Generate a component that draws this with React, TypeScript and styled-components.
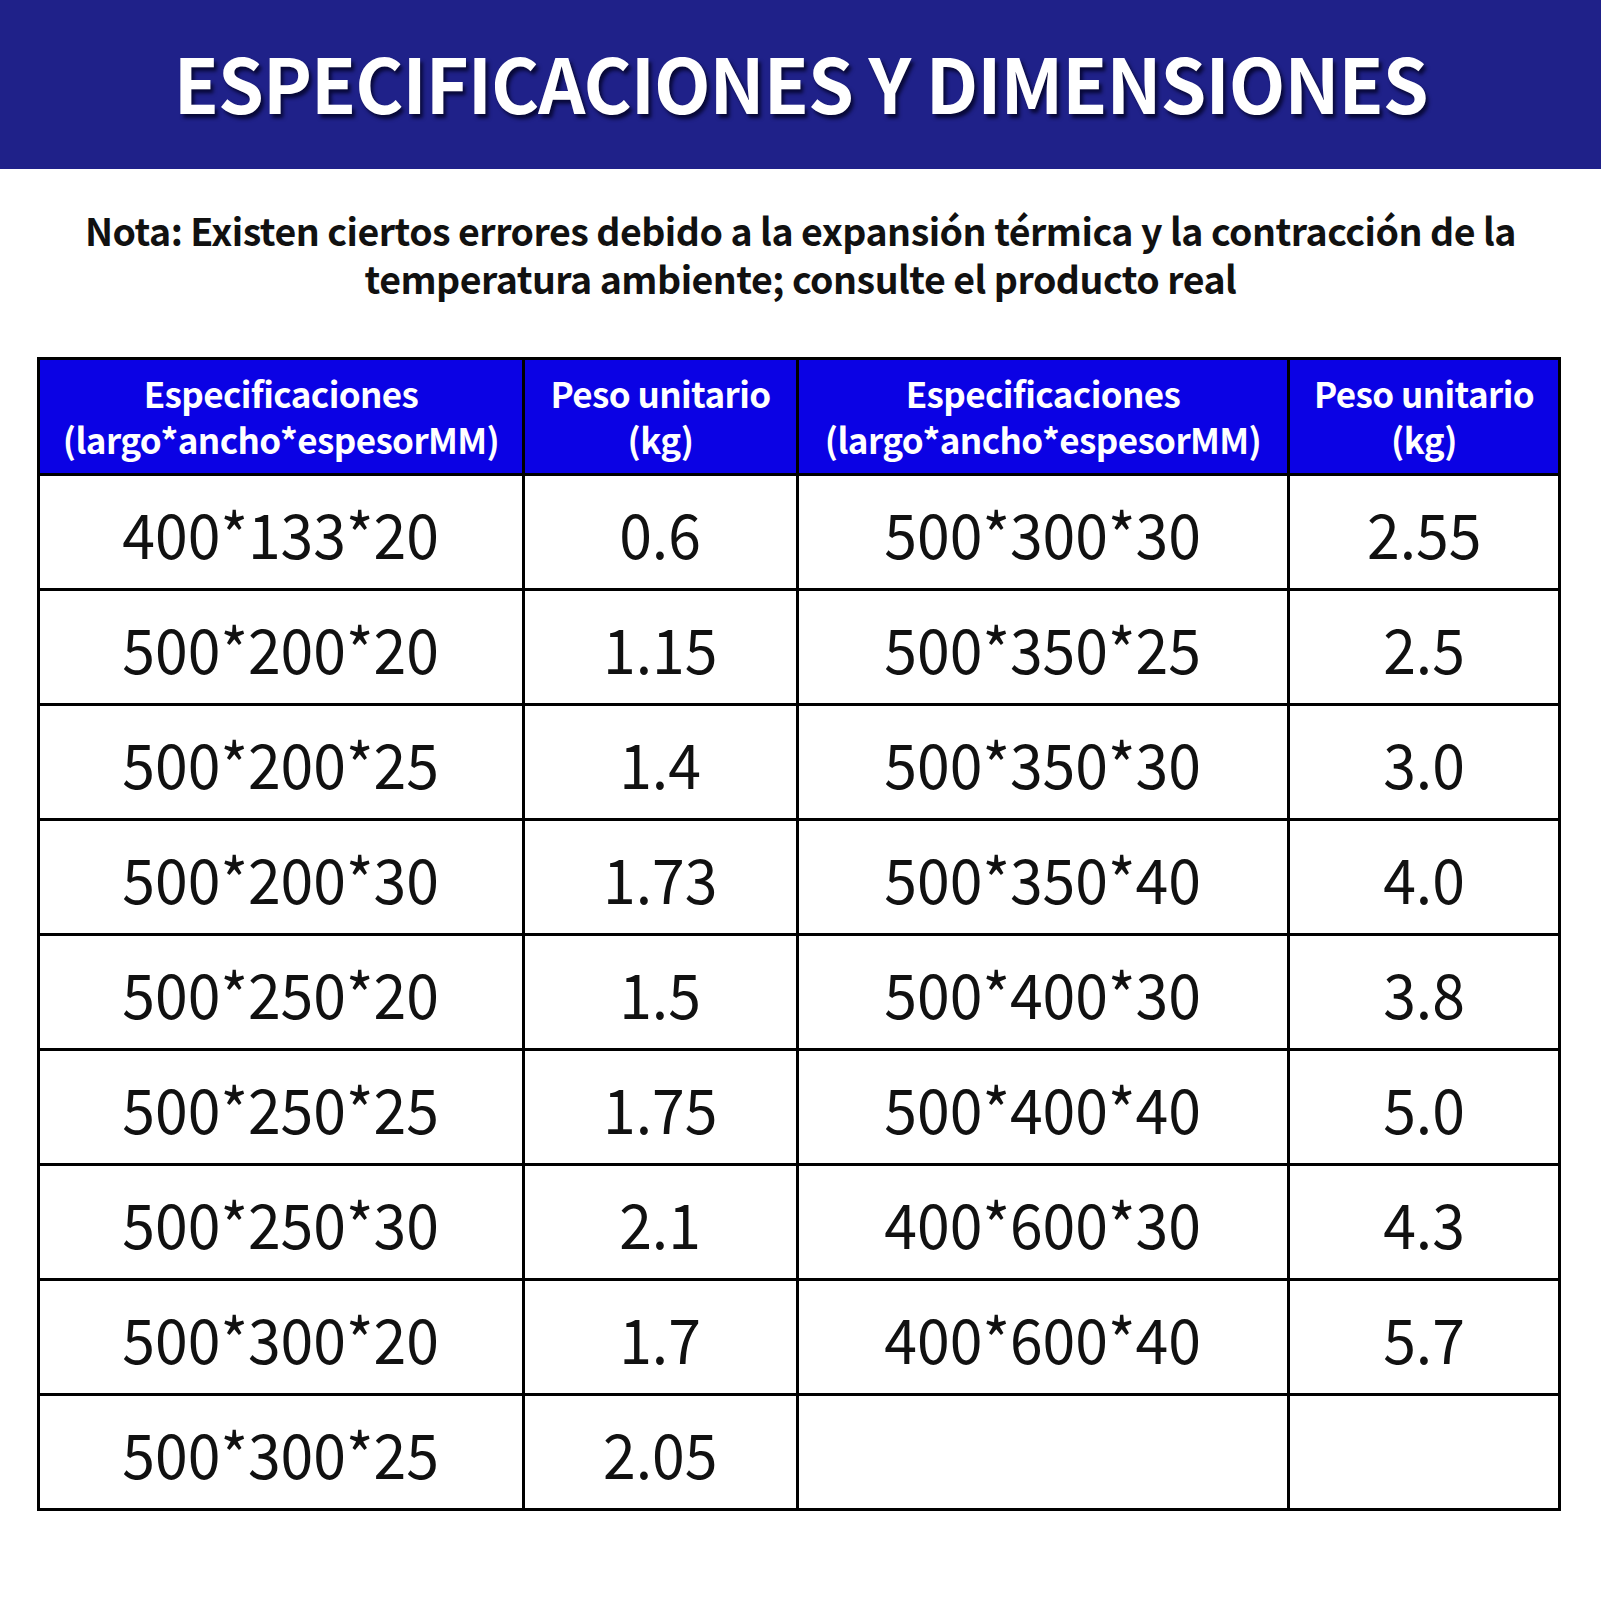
import React from "react";
import styled, { createGlobalStyle } from "styled-components";

const Global = createGlobalStyle`
  html, body { margin: 0; padding: 0; background: #ffffff; }
  body { width: 1601px; height: 1601px; overflow: hidden; font-family: "Noto Sans CJK SC", "Noto Sans", sans-serif; }
`;

const Page = styled.div`
  width: 1601px;
  height: 1601px;
  background: #ffffff;
  display: flex;
  flex-direction: column;
`;

const Banner = styled.header`
  height: 169px;
  background: #1f2189;
  display: flex;
  align-items: center;
  justify-content: center;
`;

const Title = styled.h1`
  margin: 0;
  color: #ffffff;
  font-family: "Noto Sans CJK SC", "Noto Sans", sans-serif;
  font-weight: 700;
  font-size: 75px;
  line-height: 1;
  letter-spacing: -1px;
  text-shadow: 3px 4px 4px rgba(0, 0, 30, 0.75);
  transform: scaleX(0.98);
  white-space: nowrap;
  margin-top: -6px;
`;

const Note = styled.div`
  margin: 37px 0 0;
  display: flex;
  flex-direction: column;
  align-items: center;
`;

const NoteLine = styled.span`
  display: block;
  height: 48px;
  text-align: center;
  color: #111111;
  font-family: "Noto Sans CJK SC", "Noto Sans", sans-serif;
  font-weight: 700;
  font-size: 37.5px;
  line-height: 48px;
  letter-spacing: -0.5px;
  white-space: nowrap;
`;

const Table = styled.table`
  margin: 55px 0 0 37px;
  width: 1521px;
  border-collapse: collapse;
  table-layout: fixed;
  border: 3px solid #000000;
`;

const Col = styled.col<{ $w: number }>`
  width: ${(p) => p.$w}px;
`;

const HeadCell = styled.th`
  height: 111px;
  background: #0b02e4;
  color: #ffffff;
  border: 3px solid #000000;
  padding: 0 0 2px;
  font-family: "Noto Sans CJK SC", "Noto Sans", sans-serif;
  font-weight: 700;
  font-size: 35px;
  line-height: 46px;
  letter-spacing: -0.6px;
  text-align: center;
  vertical-align: middle;
`;

const Cell = styled.td`
  height: 112px;
  border: 3px solid #000000;
  padding: 0;
  text-align: center;
  vertical-align: middle;
  color: #111111;
  font-family: "Noto Sans CJK SC", "Noto Sans", sans-serif;
  font-weight: 400;
  font-size: 62px;
  line-height: 1;
`;

const Value = styled.span`
  display: inline-block;
  transform: scaleX(0.95);
`;

const rows: [string, string, string, string][] = [
  ["400*133*20", "0.6", "500*300*30", "2.55"],
  ["500*200*20", "1.15", "500*350*25", "2.5"],
  ["500*200*25", "1.4", "500*350*30", "3.0"],
  ["500*200*30", "1.73", "500*350*40", "4.0"],
  ["500*250*20", "1.5", "500*400*30", "3.8"],
  ["500*250*25", "1.75", "500*400*40", "5.0"],
  ["500*250*30", "2.1", "400*600*30", "4.3"],
  ["500*300*20", "1.7", "400*600*40", "5.7"],
  ["500*300*25", "2.05", "", ""],
];

const SpecHead = () => (
  <HeadCell>
    Especificaciones
    <br />
    (largo*ancho*espesorMM)
  </HeadCell>
);

const WeightHead = () => (
  <HeadCell>
    Peso unitario
    <br />
    (kg)
  </HeadCell>
);

export default function App() {
  return (
    <Page>
      <Global />
      <Banner>
        <Title>ESPECIFICACIONES Y DIMENSIONES</Title>
      </Banner>
      <Note>
        <NoteLine>
          Nota: Existen ciertos errores debido a la expansión térmica y la contracción de la
        </NoteLine>
        <NoteLine>temperatura ambiente; consulte el producto real</NoteLine>
      </Note>
      <Table>
        <colgroup>
          <Col $w={485} />
          <Col $w={274} />
          <Col $w={491} />
          <Col $w={271} />
        </colgroup>
        <thead>
          <tr>
            <SpecHead />
            <WeightHead />
            <SpecHead />
            <WeightHead />
          </tr>
        </thead>
        <tbody>
          {rows.map((r, i) => (
            <tr key={i}>
              {r.map((v, j) => (
                <Cell key={j}>
                  <Value>{v}</Value>
                </Cell>
              ))}
            </tr>
          ))}
        </tbody>
      </Table>
    </Page>
  );
}
